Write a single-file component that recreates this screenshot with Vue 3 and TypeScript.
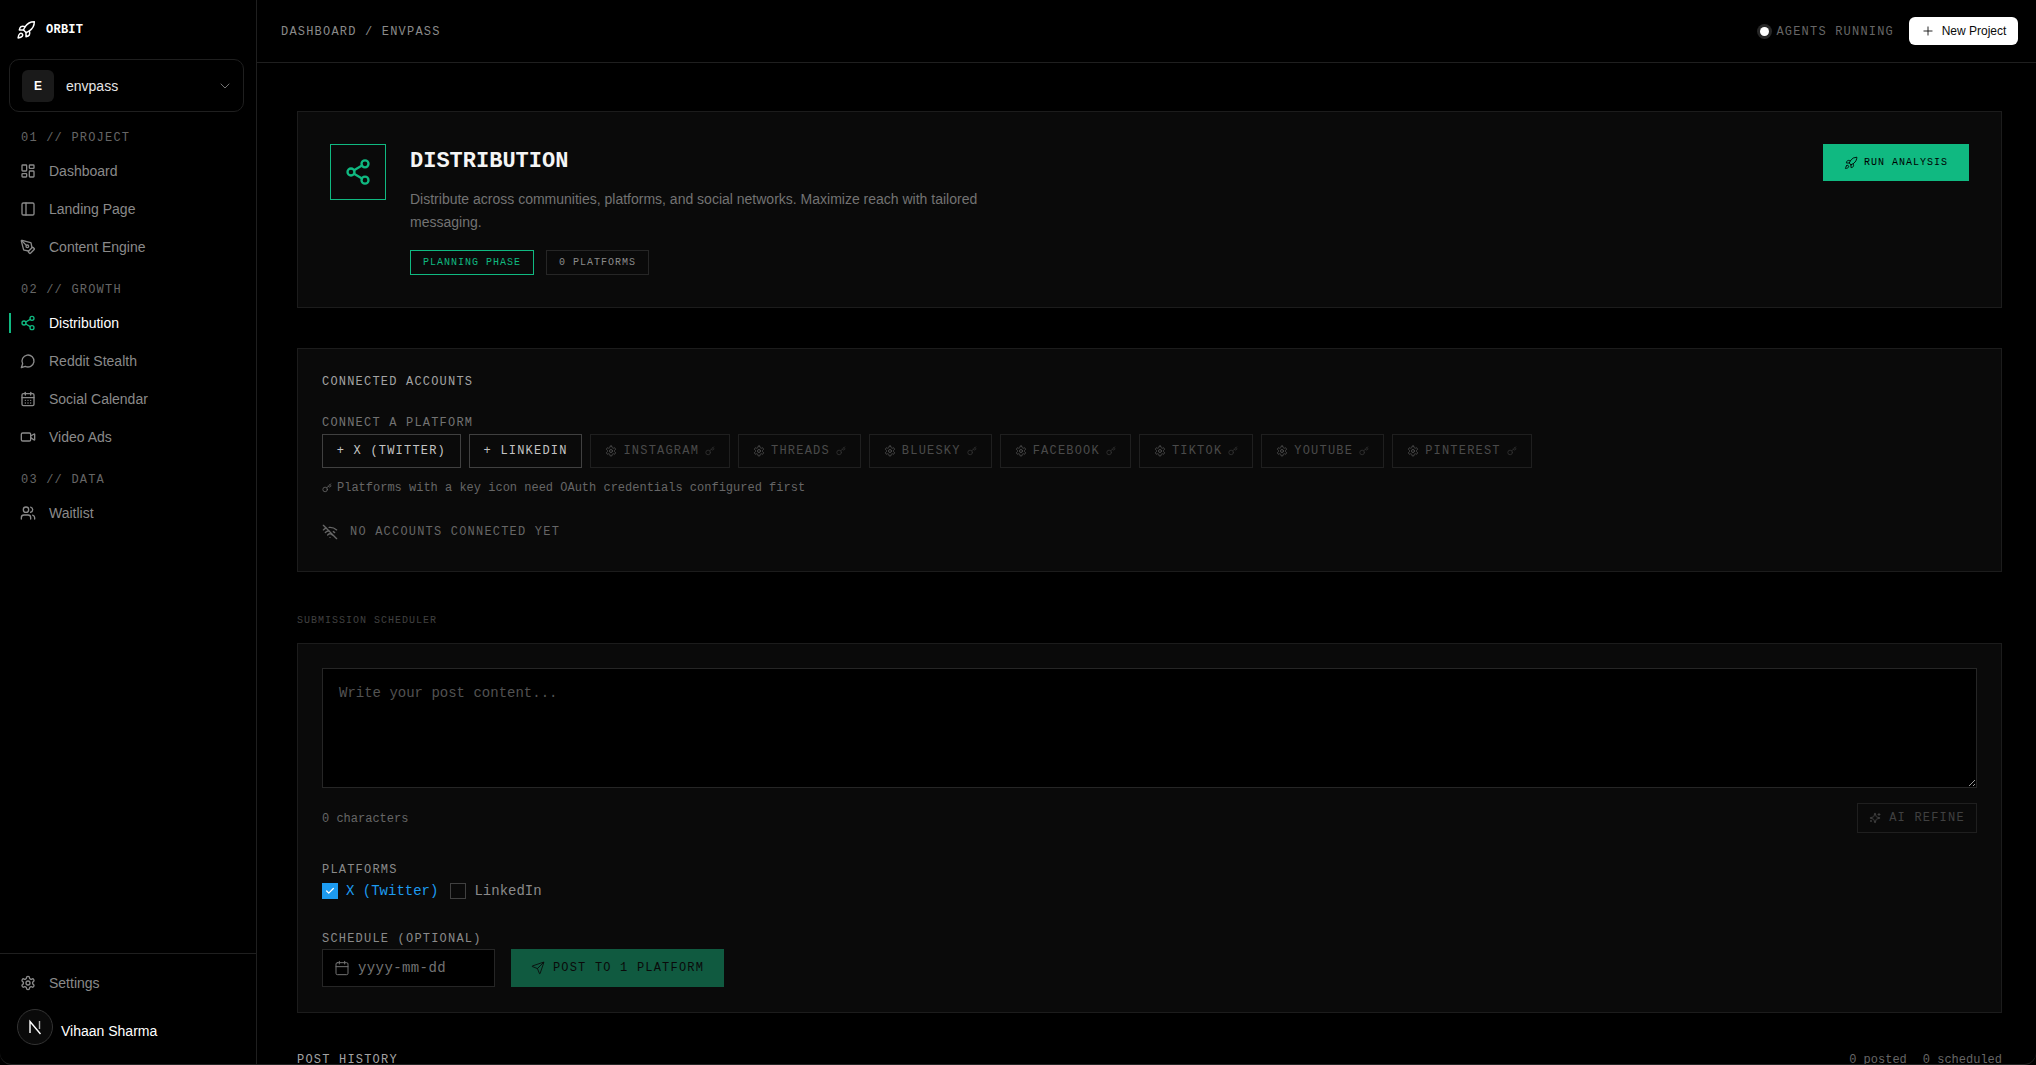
<script setup lang="ts">
const icons: Record<string, string> = {
  rocket: '<path d="M4.5 16.5c-1.5 1.26-2 5-2 5s3.74-.5 5-2c.71-.84.7-2.13-.09-2.91a2.18 2.18 0 0 0-2.91-.09z"/><path d="m12 15-3-3a22 22 0 0 1 2-3.95A12.88 12.88 0 0 1 22 2c0 2.72-.78 7.5-6 11a22.35 22.35 0 0 1-4 2z"/><path d="M9 12H4s.55-3.03 2-4c1.62-1.08 5 0 5 0"/><path d="M12 15v5s3.03-.55 4-2c1.08-1.62 0-5 0-5"/>',
  dashboard: '<rect x="3" y="3" width="7" height="9" rx="1"/><rect x="14" y="3" width="7" height="5" rx="1"/><rect x="14" y="12" width="7" height="9" rx="1"/><rect x="3" y="16" width="7" height="5" rx="1"/>',
  panel: '<rect x="3" y="3" width="18" height="18" rx="2"/><path d="M9 3v18"/>',
  pen: '<path d="M15.707 21.293a1 1 0 0 1-1.414 0l-1.586-1.586a1 1 0 0 1 0-1.414l5.586-5.586a1 1 0 0 1 1.414 0l1.586 1.586a1 1 0 0 1 0 1.414z"/><path d="m18 13-1.375-6.874a1 1 0 0 0-.746-.776L3.235 2.028a1 1 0 0 0-1.207 1.207L5.35 15.879a1 1 0 0 0 .776.746L13 18"/><path d="m2.3 2.3 7.286 7.286"/><circle cx="11" cy="11" r="2"/>',
  share: '<circle cx="18" cy="5" r="3"/><circle cx="6" cy="12" r="3"/><circle cx="18" cy="19" r="3"/><path d="M8.59 13.51l6.83 3.98"/><path d="M15.41 6.51l-6.82 3.98"/>',
  message: '<path d="M7.9 20A9 9 0 1 0 4 16.1L2 22Z"/>',
  calendarDays: '<path d="M8 2v4"/><path d="M16 2v4"/><rect x="3" y="4" width="18" height="18" rx="2"/><path d="M3 10h18"/><path d="M8 14h.01"/><path d="M12 14h.01"/><path d="M16 14h.01"/><path d="M8 18h.01"/><path d="M12 18h.01"/><path d="M16 18h.01"/>',
  video: '<path d="m16 13 5.223 3.482a.5.5 0 0 0 .777-.416V7.87a.5.5 0 0 0-.752-.432L16 10.5"/><rect x="2" y="6" width="14" height="12" rx="2"/>',
  users: '<path d="M16 21v-2a4 4 0 0 0-4-4H6a4 4 0 0 0-4 4v2"/><circle cx="9" cy="7" r="4"/><path d="M22 21v-2a4 4 0 0 0-3-3.87"/><path d="M16 3.13a4 4 0 0 1 0 7.75"/>',
  settings: '<path d="M12.22 2h-.44a2 2 0 0 0-2 2v.18a2 2 0 0 1-1 1.73l-.43.25a2 2 0 0 1-2 0l-.15-.08a2 2 0 0 0-2.73.73l-.22.38a2 2 0 0 0 .73 2.73l.15.1a2 2 0 0 1 1 1.72v.51a2 2 0 0 1-1 1.74l-.15.09a2 2 0 0 0-.73 2.73l.22.38a2 2 0 0 0 2.73.73l.15-.08a2 2 0 0 1 2 0l.43.25a2 2 0 0 1 1 1.73V20a2 2 0 0 0 2 2h.44a2 2 0 0 0 2-2v-.18a2 2 0 0 1 1-1.73l.43-.25a2 2 0 0 1 2 0l.15.08a2 2 0 0 0 2.73-.73l.22-.39a2 2 0 0 0-.73-2.73l-.15-.08a2 2 0 0 1-1-1.74v-.5a2 2 0 0 1 1-1.74l.15-.09a2 2 0 0 0 .73-2.73l-.22-.38a2 2 0 0 0-2.73-.73l-.15.08a2 2 0 0 1-2 0l-.43-.25a2 2 0 0 1-1-1.73V4a2 2 0 0 0-2-2z"/><circle cx="12" cy="12" r="3"/>',
  plus: '<path d="M5 12h14"/><path d="M12 5v14"/>',
  key: '<path d="m15.5 7.5 2.3 2.3a1 1 0 0 0 1.4 0l2.1-2.1a1 1 0 0 0 0-1.4L19 4"/><path d="m21 2-9.6 9.6"/><circle cx="7.5" cy="15.5" r="5.5"/>',
  wifiOff: '<path d="M12 20h.01"/><path d="M8.5 16.429a5 5 0 0 1 7 0"/><path d="M5 12.859a10 10 0 0 1 5.17-2.69"/><path d="M19 12.859a10 10 0 0 0-2.007-1.523"/><path d="M2 8.82a15 15 0 0 1 4.177-2.643"/><path d="M22 8.82a15 15 0 0 0-11.288-3.764"/><path d="m2 2 20 20"/>',
  sparkles: '<path d="M9.937 15.5A2 2 0 0 0 8.5 14.063l-6.135-1.582a.5.5 0 0 1 0-.962L8.5 9.936A2 2 0 0 0 9.937 8.5l1.582-6.135a.5.5 0 0 1 .963 0L14.063 8.5A2 2 0 0 0 15.5 9.937l6.135 1.581a.5.5 0 0 1 0 .964L15.5 14.063a2 2 0 0 0-1.437 1.437l-1.582 6.135a.5.5 0 0 1-.963 0z"/><path d="M20 3v4"/><path d="M22 5h-4"/><path d="M4 17v2"/><path d="M5 18H3"/>',
  send: '<path d="M14.536 21.686a.5.5 0 0 0 .937-.024l6.5-19a.496.496 0 0 0-.635-.635l-19 6.5a.5.5 0 0 0-.024.937l7.93 3.18a2 2 0 0 1 1.112 1.11z"/><path d="m21.854 2.147-10.94 10.939"/>',
  calendar: '<path d="M8 2v4"/><path d="M16 2v4"/><rect x="3" y="4" width="18" height="18" rx="2"/><path d="M3 10h18"/>',
  chevron: '<path d="m6 9 6 6 6-6"/>',
  check: '<path d="M20 6 9 17l-5-5"/>',
};

const navGroups = [
  {
    label: "01 // PROJECT",
    items: [
      { name: "Dashboard", icon: "dashboard" },
      { name: "Landing Page", icon: "panel" },
      { name: "Content Engine", icon: "pen" },
    ],
  },
  {
    label: "02 // GROWTH",
    items: [
      { name: "Distribution", icon: "share", active: true },
      { name: "Reddit Stealth", icon: "message" },
      { name: "Social Calendar", icon: "calendarDays" },
      { name: "Video Ads", icon: "video" },
    ],
  },
  {
    label: "03 // DATA",
    items: [{ name: "Waitlist", icon: "users" }],
  },
];

const readyPlatforms = ["X (TWITTER)", "LINKEDIN"];
const lockedPlatforms = ["INSTAGRAM", "THREADS", "BLUESKY", "FACEBOOK", "TIKTOK", "YOUTUBE", "PINTEREST"];
</script>

<template>
  <div class="shell">
    <aside class="sidebar">
      <div class="brand">
        <svg class="ic brand-ic" viewBox="0 0 24 24" v-html="icons.rocket"></svg>
        <span>ORBIT</span>
      </div>
      <div class="project">
        <span class="project-badge">E</span>
        <span class="project-name">envpass</span>
        <svg class="ic chevron" viewBox="0 0 24 24" v-html="icons.chevron"></svg>
      </div>
      <nav class="nav">
        <div v-for="group in navGroups" :key="group.label" class="nav-group">
          <div class="nav-label">{{ group.label }}</div>
          <a v-for="item in group.items" :key="item.name" class="nav-item" :class="{ active: item.active }">
            <svg class="ic nav-ic" viewBox="0 0 24 24" v-html="icons[item.icon]"></svg>
            {{ item.name }}
          </a>
        </div>
      </nav>
      <div class="side-foot">
        <a class="nav-item">
          <svg class="ic nav-ic" viewBox="0 0 24 24" v-html="icons.settings"></svg>
          Settings
        </a>
        <div class="user">
          <span class="avatar">
            <svg viewBox="0 0 24 24" width="24" height="24" fill="none" stroke="#fff" stroke-width="1.4">
              <path d="M7 18V6.5L17.5 19" />
              <path d="M16.5 6v8" stroke-opacity=".7" />
            </svg>
          </span>
          <span class="user-name">Vihaan Sharma</span>
        </div>
      </div>
    </aside>

    <main class="main">
      <header class="topbar">
        <div class="crumbs">DASHBOARD / ENVPASS</div>
        <div class="top-right">
          <span class="pulse"></span>
          <span class="agents">AGENTS RUNNING</span>
          <button class="new-btn">
            <svg class="ic" viewBox="0 0 24 24" v-html="icons.plus"></svg>
            New Project
          </button>
        </div>
      </header>

      <div class="content">
        <section class="card hero">
          <div class="hero-icon">
            <svg class="ic" viewBox="0 0 24 24" v-html="icons.share"></svg>
          </div>
          <div class="hero-body">
            <h1>DISTRIBUTION</h1>
            <p>Distribute across communities, platforms, and social networks. Maximize reach with tailored messaging.</p>
            <div class="tags">
              <span class="tag green">PLANNING PHASE</span>
              <span class="tag">0 PLATFORMS</span>
            </div>
          </div>
          <button class="run-btn">
            <svg class="ic" viewBox="0 0 24 24" v-html="icons.rocket"></svg>
            RUN ANALYSIS
          </button>
        </section>

        <section class="card accounts">
          <h2>CONNECTED ACCOUNTS</h2>
          <div class="connect-label">CONNECT A PLATFORM</div>
          <div class="platforms">
            <button v-for="p in readyPlatforms" :key="p" class="plat">+ {{ p }}</button>
            <button v-for="p in lockedPlatforms" :key="p" class="plat locked">
              <svg class="ic" viewBox="0 0 24 24" v-html="icons.settings"></svg>
              {{ p }}
              <svg class="ic key" viewBox="0 0 24 24" v-html="icons.key"></svg>
            </button>
          </div>
          <div class="note">
            <svg class="ic" viewBox="0 0 24 24" v-html="icons.key"></svg>
            Platforms with a key icon need OAuth credentials configured first
          </div>
          <div class="empty">
            <svg class="ic" viewBox="0 0 24 24" v-html="icons.wifiOff"></svg>
            NO ACCOUNTS CONNECTED YET
          </div>
        </section>

        <div class="section-label">SUBMISSION SCHEDULER</div>
        <section class="card scheduler">
          <textarea class="post-input" placeholder="Write your post content..."></textarea>
          <div class="count-row">
            <span class="count">0 characters</span>
            <button class="refine">
              <svg class="ic" viewBox="0 0 24 24" v-html="icons.sparkles"></svg>
              AI REFINE
            </button>
          </div>
          <div class="field-label">PLATFORMS</div>
          <div class="checks">
            <label class="check on">
              <span class="box"><svg class="ic" viewBox="0 0 24 24" v-html="icons.check"></svg></span>
              X (Twitter)
            </label>
            <label class="check">
              <span class="box"></span>
              LinkedIn
            </label>
          </div>
          <div class="field-label schedule">SCHEDULE (OPTIONAL)</div>
          <div class="schedule-row">
            <div class="date">
              <svg class="ic" viewBox="0 0 24 24" v-html="icons.calendar"></svg>
              yyyy-mm-dd
            </div>
            <button class="post-btn">
              <svg class="ic" viewBox="0 0 24 24" v-html="icons.send"></svg>
              POST TO 1 PLATFORM
            </button>
          </div>
        </section>

        <div class="history-head">
          <span>POST HISTORY</span>
          <span class="history-stats"><span>0 posted</span><span>0 scheduled</span></span>
        </div>
      </div>
    </main>
  </div>
</template>

<style>
html,
body {
  margin: 0;
  background: #000;
  height: 100%;
  overflow: hidden;
}
</style>

<style scoped>
* {
  box-sizing: border-box;
}

.shell {
  display: flex;
  height: 1065px;
  background: #000;
  border-bottom: 1px solid #262626;
  border-radius: 0 0 12px 12px;
  overflow: hidden;
  font-family: "Liberation Sans", Arial, sans-serif;
  color: #fff;
}

.ic {
  fill: none;
  stroke: currentColor;
  stroke-width: 2;
  stroke-linecap: round;
  stroke-linejoin: round;
  flex-shrink: 0;
}

button {
  font-family: inherit;
  cursor: pointer;
}

.sidebar {
  width: 257px;
  flex-shrink: 0;
  border-right: 1px solid #1f1f1f;
  display: flex;
  flex-direction: column;
  padding: 0 12px 0 9px;
}

.brand {
  height: 59px;
  display: flex;
  align-items: center;
  gap: 10px;
  padding-left: 7px;
  font: 700 12px "Liberation Mono", monospace;
  letter-spacing: 0.02em;
}

.brand-ic {
  width: 20px;
  height: 20px;
  stroke-width: 1.75;
}

.project {
  height: 53px;
  border: 1px solid #1f1f1f;
  border-radius: 10px;
  display: flex;
  align-items: center;
  padding: 0 10px 0 12px;
}

.project-badge {
  width: 32px;
  height: 32px;
  border-radius: 6px;
  background: #1a1a1a;
  display: flex;
  align-items: center;
  justify-content: center;
  font-size: 12px;
  font-weight: 700;
}

.project-name {
  margin-left: 12px;
  font-size: 14px;
  flex: 1;
  color: #e5e5e5;
}

.chevron {
  width: 16px;
  height: 16px;
  stroke-width: 1.5;
  color: #737373;
}

.nav {
  padding-top: 15px;
}

.nav-group {
  margin-bottom: 13px;
}

.nav-label {
  padding-left: 12px;
  font: 12px/22px "Liberation Mono", monospace;
  letter-spacing: 0.1em;
  color: #666;
  margin-bottom: 3px;
}

.nav-item {
  position: relative;
  display: flex;
  align-items: center;
  gap: 13px;
  height: 38px;
  padding-left: 11px;
  font-size: 14px;
  color: #8a8a8a;
}

.nav-ic {
  width: 16px;
  height: 16px;
}

.nav-item.active {
  color: #fff;
}

.nav-item.active .nav-ic {
  color: #10b981;
}

.nav-item.active::before {
  content: "";
  position: absolute;
  left: 0;
  top: 9px;
  width: 2px;
  height: 20px;
  background: #10b981;
}

.side-foot {
  margin-top: auto;
  margin-left: -9px;
  margin-right: -12px;
  border-top: 1px solid #1f1f1f;
  padding: 10px 12px 19px 9px;
}

.user {
  display: flex;
  align-items: center;
  gap: 8px;
  margin-top: 7px;
  padding-left: 8px;
  font-size: 14px;
}

.user-name {
  margin-top: 8px;
}

.avatar {
  width: 36px;
  height: 36px;
  border-radius: 50%;
  background: #0a0a0a;
  border: 1px solid #333;
  display: flex;
  align-items: center;
  justify-content: center;
}

.main {
  flex: 1;
  min-width: 0;
}

.topbar {
  height: 63px;
  border-bottom: 1px solid #1f1f1f;
  display: flex;
  align-items: center;
  justify-content: space-between;
  padding: 0 18px 0 24px;
}

.crumbs {
  padding-top: 2px;
  font: 12px "Liberation Mono", monospace;
  letter-spacing: 0.1em;
  color: #8a8a8a;
}

.top-right {
  display: flex;
  align-items: center;
}

.pulse {
  width: 9px;
  height: 9px;
  border-radius: 50%;
  background: #fff;
  box-shadow: 0 0 0 3px #262626;
  margin-right: 7px;
}

.agents {
  padding-top: 2px;
  font: 12px "Liberation Mono", monospace;
  letter-spacing: 0.1em;
  color: #666;
  margin-right: 15px;
}

.new-btn {
  height: 28px;
  width: 109px;
  background: #fff;
  color: #0a0a0a;
  border: 0;
  border-radius: 6px;
  display: flex;
  align-items: center;
  justify-content: center;
  gap: 7px;
  font-size: 12px;
}

.new-btn .ic {
  width: 14px;
  height: 14px;
  stroke-width: 1.5;
}

.content {
  padding: 48px 34px 0 40px;
}

.card {
  background: #0a0a0a;
  border: 1px solid #1c1c1c;
}

.hero {
  display: flex;
  align-items: flex-start;
  padding: 32px;
  height: 197px;
  margin-bottom: 40px;
}

.hero-icon {
  width: 56px;
  height: 56px;
  border: 1px solid #10b981;
  color: #10b981;
  display: flex;
  align-items: center;
  justify-content: center;
  margin-right: 24px;
  flex-shrink: 0;
}

.hero-icon .ic {
  width: 28px;
  height: 28px;
}

.hero-body {
  flex: 1;
}

h1 {
  margin: 2px 0 10px;
  font: 700 22px/32px "Liberation Mono", monospace;
  color: #f5f5f5;
}

.hero-body p {
  margin: 0 0 16px;
  max-width: 576px;
  font-size: 14px;
  line-height: 23px;
  color: #737373;
}

.tags {
  display: flex;
  gap: 12px;
}

.tag {
  height: 25px;
  padding: 0 12px;
  border: 1px solid #262626;
  font: 10px/23px "Liberation Mono", monospace;
  letter-spacing: 0.1em;
  color: #8a8a8a;
}

.tag.green {
  border-color: #10b981;
  color: #10b981;
}

.run-btn {
  height: 37px;
  width: 146px;
  flex-shrink: 0;
  background: #10b981;
  color: #000;
  border: 0;
  display: flex;
  align-items: center;
  justify-content: center;
  gap: 6px;
  font: 10px "Liberation Mono", monospace;
  letter-spacing: 0.1em;
}

.run-btn .ic {
  width: 14px;
  height: 14px;
  stroke-width: 1.5;
}

.accounts {
  padding: 24px;
  height: 224px;
}

h2 {
  margin: 0 0 25px;
  padding-top: 1px;
  font: 400 12px/16px "Liberation Mono", monospace;
  letter-spacing: 0.1em;
  color: #a3a3a3;
}

.connect-label {
  font: 12px/16px "Liberation Mono", monospace;
  letter-spacing: 0.1em;
  color: #737373;
  margin-bottom: 3px;
}

.platforms {
  display: flex;
  gap: 8px;
}

.plat {
  height: 34px;
  padding: 0 13.8px;
  background: transparent;
  border: 1px solid #404040;
  color: #c4c4c4;
  display: flex;
  align-items: center;
  gap: 6px;
  font: 12px "Liberation Mono", monospace;
  letter-spacing: 0.1em;
}

.plat.locked {
  padding: 0 14px;
  border-color: #1f1f1f;
  color: #4a4a4a;
}

.plat.locked .ic {
  width: 12px;
  height: 12px;
}

.plat.locked .key {
  width: 10px;
  height: 10px;
  color: #333;
}

.note {
  display: flex;
  align-items: center;
  gap: 5px;
  margin-top: 12px;
  font: 12px/16px "Liberation Mono", monospace;
  color: #666;
}

.note .ic {
  width: 10px;
  height: 10px;
}

.empty {
  display: flex;
  align-items: center;
  gap: 12px;
  margin-top: 28px;
  font: 12px/16px "Liberation Mono", monospace;
  letter-spacing: 0.1em;
  color: #666;
}

.empty .ic {
  width: 16px;
  height: 16px;
}

.section-label {
  margin: 42px 0 15px;
  font: 10px/14px "Liberation Mono", monospace;
  letter-spacing: 0.1em;
  color: #404040;
}

.scheduler {
  padding: 24px;
  height: 370px;
}

.post-input {
  display: block;
  width: 100%;
  height: 120px;
  background: #000;
  border: 1px solid #262626;
  border-radius: 0;
  padding: 14px 16px;
  color: #fff;
  outline: none;
  font: 14px/20px "Liberation Mono", monospace;
}

.post-input::placeholder {
  color: #525252;
}

.count-row {
  display: flex;
  justify-content: space-between;
  align-items: center;
  margin-top: 15px;
  height: 30px;
}

.count {
  padding-top: 2px;
  font: 12px "Liberation Mono", monospace;
  color: #666;
}

.refine {
  height: 30px;
  width: 120px;
  background: transparent;
  border: 1px solid #1f1f1f;
  color: #404040;
  display: flex;
  align-items: center;
  justify-content: center;
  gap: 8px;
  font: 12px "Liberation Mono", monospace;
  letter-spacing: 0.1em;
}

.refine .ic {
  width: 12px;
  height: 12px;
}

.field-label {
  margin-top: 29px;
  font: 12px/16px "Liberation Mono", monospace;
  letter-spacing: 0.1em;
  color: #8a8a8a;
}

.field-label.schedule {
  margin-top: 30px;
}

.checks {
  display: flex;
  gap: 12px;
  margin-top: 3px;
}

.check {
  display: flex;
  align-items: center;
  gap: 8px;
  font: 14px/20px "Liberation Mono", monospace;
  color: #8a8a8a;
}

.check.on {
  color: #1d9bf0;
}

.box {
  width: 16px;
  height: 16px;
  border: 1px solid #404040;
  display: flex;
  align-items: center;
  justify-content: center;
}

.check.on .box {
  background: #1d9bf0;
  border-color: #1d9bf0;
  color: #fff;
}

.box .ic {
  width: 10px;
  height: 10px;
  stroke-width: 3;
}

.schedule-row {
  display: flex;
  gap: 16px;
  margin-top: 2px;
}

.date {
  width: 173px;
  height: 38px;
  background: #000;
  border: 1px solid #262626;
  padding-left: 11px;
  display: flex;
  align-items: center;
  gap: 8px;
  font: 14px "Liberation Mono", monospace;
  letter-spacing: 0.4px;
  color: #737373;
}

.date .ic {
  width: 16px;
  height: 16px;
  stroke-width: 1.5;
}

.post-btn {
  width: 213px;
  height: 38px;
  padding-top: 1px;
  background: #105a40;
  color: #0a0a0a;
  border: 0;
  display: flex;
  align-items: center;
  justify-content: center;
  gap: 8px;
  font: 12px "Liberation Mono", monospace;
  letter-spacing: 0.1em;
}

.post-btn .ic {
  width: 14px;
  height: 14px;
  stroke-width: 1.5;
}

.history-head {
  display: flex;
  justify-content: space-between;
  align-items: center;
  margin-top: 39px;
  font: 12px/16px "Liberation Mono", monospace;
  letter-spacing: 0.1em;
  color: #a3a3a3;
}

.history-stats {
  display: flex;
  gap: 16px;
  letter-spacing: 0;
  color: #666;
}
</style>
